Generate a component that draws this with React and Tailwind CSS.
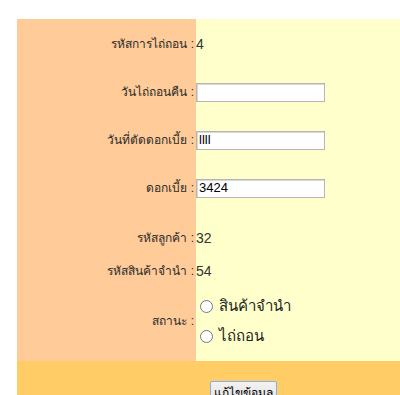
import { useState } from "react";

const font = { fontFamily: "Tahoma, 'Liberation Sans', sans-serif" };

const Row = ({ label, h, pad = "", children }) => (
  <div className={`flex ${h}`}>
    <div className={`w-[179px] shrink-0 bg-[#ffcc99] flex items-center justify-end pr-[2px] text-[12px] font-medium text-[#2b2b2b] whitespace-nowrap ${pad}`}>
      {label} :
    </div>
    <div className={`flex-1 bg-[#ffffcc] flex items-center text-[14px] text-[#333] ${pad}`}>
      {children}
    </div>
  </div>
);

const TextBox = ({ value }) => (
  <input
    type="text"
    defaultValue={value}
    className="w-[129px] h-[19px] bg-white border border-[#b5b5b5] shadow-[inset_1px_1px_0_#d8d8d8] px-[2px] text-[13px] text-black outline-none"
  />
);

export default function App() {
  const [status, setStatus] = useState("");

  return (
    <div className="bg-white w-[400px] h-[395px] overflow-hidden pt-[19px] pl-[17px]" style={font}>
      <div className="w-[383px]">
        <Row label="รหัสการไถ่ถอน" h="h-[50px]">
          <span>4</span>
        </Row>
        <Row label="วันไถ่ถอนคืน" h="h-[46px]">
          <TextBox value="" />
        </Row>
        <Row label="วันที่ตัดดอกเบี้ย" h="h-[50px]">
          <TextBox value="llll" />
        </Row>
        <Row label="ดอกเบี้ย" h="h-[46px]">
          <TextBox value="3424" />
        </Row>
        <Row label="รหัสลูกค้า" h="h-[50px]" pad="pt-[4px]">
          <span>32</span>
        </Row>
        <Row label="รหัสสินค้าจำนำ" h="h-[20px]">
          <span>54</span>
        </Row>
        <Row label="สถานะ" h="h-[80px]">
          <div className="flex flex-col gap-[12px] pl-[4px] text-[15px] font-medium text-[#222]">
            {["สินค้าจำนำ", "ไถ่ถอน"].map((s) => (
              <label key={s} className="flex items-center gap-[6px] h-[18px]">
                <input
                  type="radio"
                  name="status"
                  checked={status === s}
                  onChange={() => setStatus(s)}
                  className="w-[13px] h-[13px] m-0"
                />
                {s}
              </label>
            ))}
          </div>
        </Row>
        <div className="bg-[#ffcc66] h-[40px] pt-[19px] pl-[193px]">
          <button className="w-[67px] h-[24px] border border-[#7eb4ea] rounded-[2px] bg-gradient-to-b from-[#f2f2f2] to-[#e1e1e1] text-[12px] text-black leading-[20px] whitespace-nowrap">
            แก้ไขข้อมูล
          </button>
        </div>
      </div>
    </div>
  );
}
